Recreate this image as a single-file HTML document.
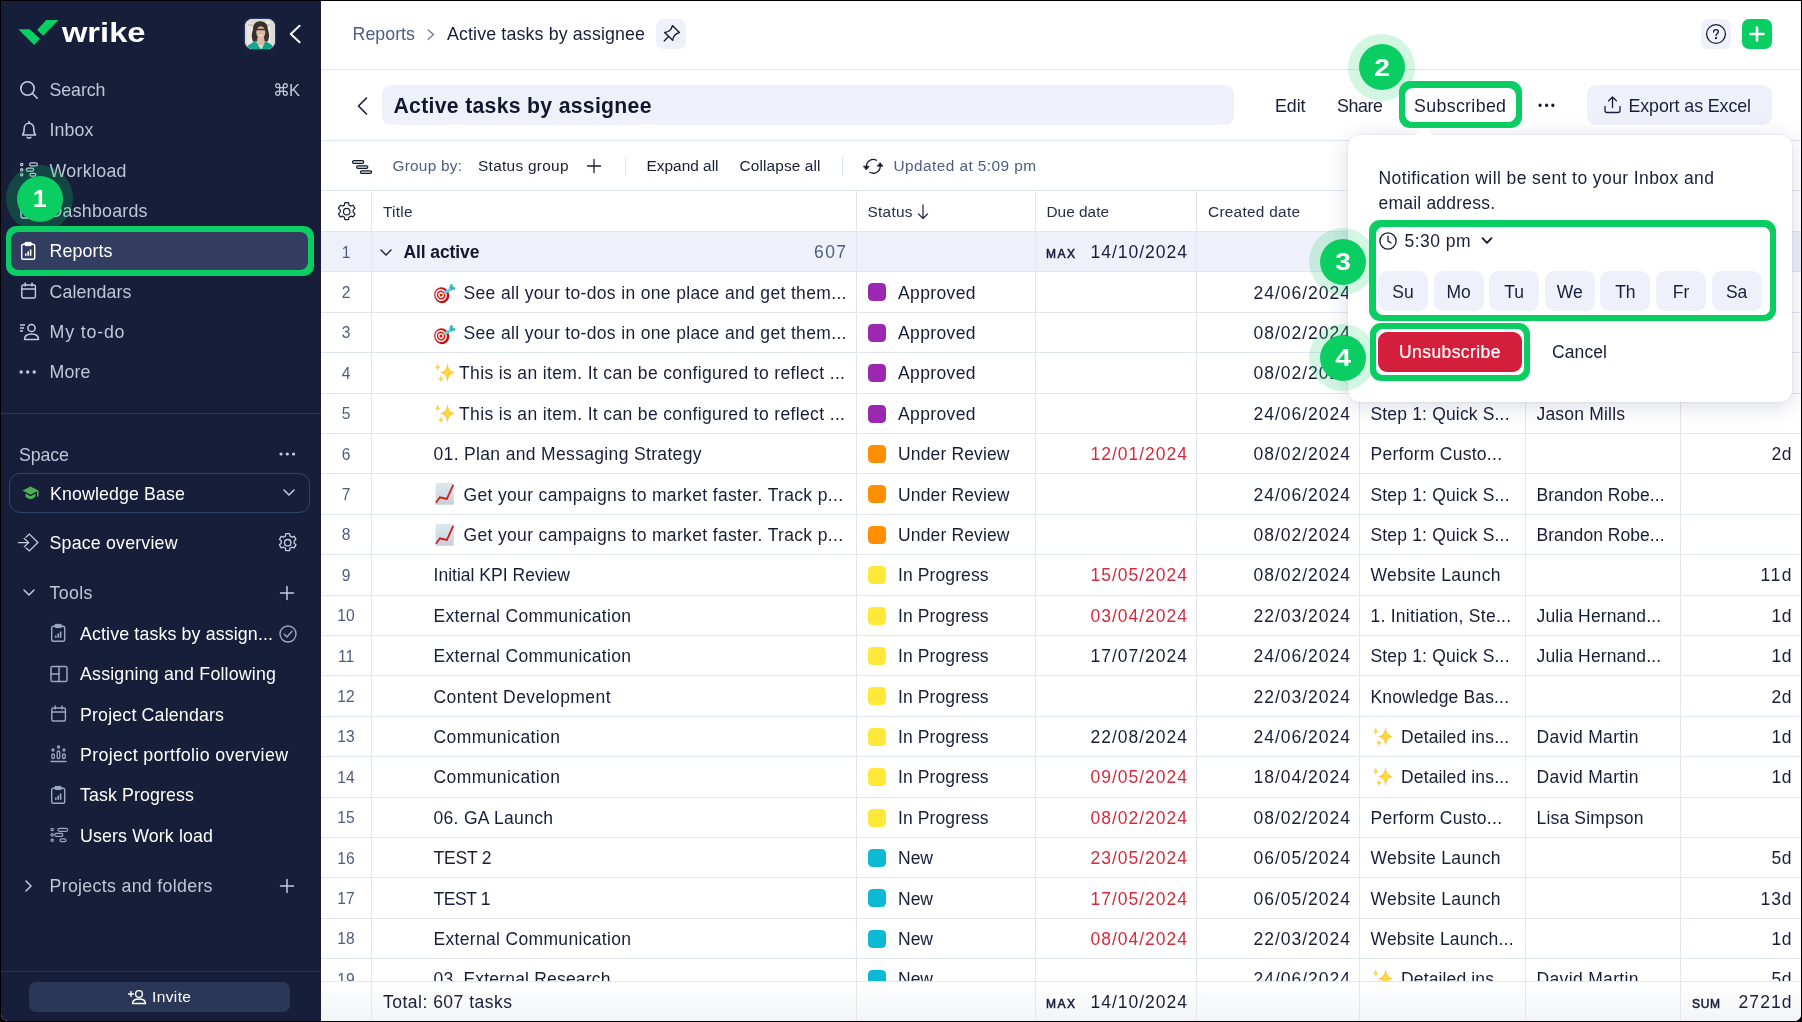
<!DOCTYPE html>
<html lang="en"><head><meta charset="utf-8"><title>Active tasks by assignee - Wrike</title>
<style>
html,body{margin:0;padding:0}
body{width:1802px;height:1022px;overflow:hidden;background:#000;position:relative;font-family:"Liberation Sans",sans-serif}
#app{position:absolute;left:1px;top:1px;width:1800px;height:1020px;overflow:hidden;background:#fff;border-radius:0 0 7px 7px}
#wrap{will-change:transform;position:absolute;left:-1px;top:-1px;width:1802px;height:1022px}
.t{position:absolute;white-space:pre;line-height:1;font-family:"Liberation Sans",sans-serif}
.a{position:absolute}
svg{position:absolute;overflow:visible}
.hl{position:absolute;background:#e2e6f1;height:1px}
.vl{position:absolute;background:#e2e6f1;width:1px}
</style></head><body><div id="app"><div id="wrap">
<div class="a" style="left:0px;top:0px;width:321.6px;height:1022px;background:#171e3a"></div>
<svg style="left:18px;top:20px" width="41" height="26" viewBox="0 0 41 26" fill="none" ><path d="M0.3 9.2 L11.6 9.2 L22 18.7 L16.1 25 Z M28.2 0 L40.7 0 L25.3 15.8 L19.1 10 Z" fill="#0bce62"/></svg>
<span class="t" style="top:19.00px;font-size:28px;color:#ffffff;font-weight:700;transform:scaleX(1.165);transform-origin:0 0;left:62.00px;">wrike</span>
<div class="a" style="left:244.5px;top:18.5px;width:30px;height:30px;border-radius:7.5px;overflow:hidden;background:#dcdad7;box-shadow:0 0 0 1.2px #2a3560"><svg style="left:0;top:0" width="30" height="30" viewBox="0 0 30 30"><rect width="30" height="30" fill="#dddbd8"/><rect x="20" y="2" width="5" height="24" fill="#ecebe9"/><rect x="2" y="4" width="5" height="22" fill="#e9e8e6"/><rect x="3" y="5" width="22" height="2.2" fill="#d5c9b8"/><path d="M15.5 2.2 C9.5 1.8 7.8 7 8 11 C6.2 14.5 6.5 19.5 8.2 22.5 L22.5 22.5 C24.8 18.5 24.2 13.5 22.8 10.5 C23 6 20.5 2.4 15.5 2.2 Z" fill="#3b312b"/><ellipse cx="15.8" cy="13.2" rx="4.5" ry="6" fill="#dcb9a2"/><path d="M11.2 10.6 H20.4" stroke="#3a2f2a" stroke-width="1.5"/><path d="M13.6 16.2 Q15.8 17.6 18 16.2" stroke="#f5eeea" stroke-width="1" fill="none"/><path d="M12.6 18 L19 18 L20.2 26 L11.4 26 Z" fill="#dcb9a2"/><path d="M1.5 30 L3 26.5 L10.2 21.8 L14.8 28.5 L15.6 30 Z" fill="#12a98c"/><path d="M28.5 30 L27 26 L20.4 22 L17.4 28.8 L16.8 30 Z" fill="#0fa184"/></svg></div>
<svg style="left:289px;top:24px" width="12" height="20" viewBox="0 0 12 20" fill="none" stroke="#ffffff" stroke-width="2" stroke-linecap="round" stroke-linejoin="round"><path d="M10.6 1.8 L1.8 10 L10.6 18.2"/></svg>
<div class="a" style="left:5.5px;top:226px;width:308.5px;height:50px;background:#0bce62;border-radius:10px"></div>
<div class="a" style="left:11.3px;top:232px;width:297.0px;height:37.60000000000002px;background:#323d60;border-radius:8px"></div>
<svg style="left:19px;top:80px" width="20" height="20" viewBox="0 0 20 20" fill="none" stroke="#c5ccdf" stroke-width="1.6" stroke-linecap="round" stroke-linejoin="round"><circle cx="8.5" cy="8.5" r="6.7"/><path d="M13.5 13.5 L18.2 18.2"/></svg>
<svg style="left:19px;top:120px" width="20" height="20" viewBox="0 0 20 20" fill="none" stroke="#c5ccdf" stroke-width="1.5" stroke-linecap="round" stroke-linejoin="round"><path d="M3.5 15 H16.5 C15 13.5 14.8 11.5 14.8 8.5 C14.8 5.5 12.8 3.3 10 3.3 C7.2 3.3 5.2 5.5 5.2 8.5 C5.2 11.5 5 13.5 3.5 15 Z"/><path d="M8.2 17.3 Q10 18.8 11.8 17.3"/><path d="M10 1.6 V3"/></svg>
<svg style="left:19px;top:160px" width="20" height="20" viewBox="0 0 20 20" fill="none" stroke="#c5ccdf" stroke-width="1.2" stroke-linecap="round" stroke-linejoin="round"><circle cx="2.7" cy="4.5" r="1.15"/><circle cx="2.7" cy="9.7" r="1.15"/><circle cx="2.7" cy="14.8" r="1.15"/><rect x="10.6" y="2.9" width="7.8" height="3" rx="1.5"/><rect x="7.4" y="8.2" width="7.2" height="3" rx="1.5"/><rect x="11" y="13.4" width="5.8" height="2.8" rx="1.4"/></svg>
<svg style="left:20px;top:201px" width="18" height="18" viewBox="0 0 18 18" fill="none" stroke="#c5ccdf" stroke-width="1.5" stroke-linecap="round" stroke-linejoin="round"><rect x="1" y="1" width="16" height="16" rx="2"/><path d="M1 7 H17 M7 7 V17"/></svg>
<svg style="left:19.5px;top:240.5px" width="18" height="20" viewBox="0 0 18 20" fill="none" stroke="#ffffff" stroke-width="1.4" stroke-linecap="round" stroke-linejoin="round"><rect x="1.7" y="3.2" width="13" height="15" rx="1.8"/><rect x="4.9" y="1.4" width="6.6" height="3.2" rx="0.9" fill="#ffffff" stroke-width="1"/><path d="M5.8 14.8 V12.6 M8.2 14.8 V10.6 M10.6 14.8 V8.6" stroke-width="1.6" stroke-linecap="butt"/></svg>
<svg style="left:20px;top:282px" width="18" height="18" viewBox="0 0 18 18" fill="none" stroke="#c5ccdf" stroke-width="1.4" stroke-linecap="round" stroke-linejoin="round"><rect x="1.8" y="3" width="13.6" height="13" rx="1.5"/><path d="M1.8 7 H15.4 M5.2 1 V4 M12 1 V4"/></svg>
<svg style="left:19px;top:322px" width="21" height="20" viewBox="0 0 21 20" fill="none" stroke="#c5ccdf" stroke-width="1.5" stroke-linecap="round" stroke-linejoin="round"><circle cx="12.5" cy="6" r="3.6"/><path d="M5.5 17.5 C5.5 13.5 8.5 12 12.5 12 C16.5 12 19.5 13.5 19.5 17.5 Z"/><path d="M1 3 H6 M1 6 H5 M1 9 H4" stroke-linecap="butt"/></svg>
<svg style="left:19px;top:369px" width="18" height="6" viewBox="0 0 18 6" fill="#c5ccdf" ><circle cx="2.2" cy="3" r="1.7"/><circle cx="8.7" cy="3" r="1.7"/><circle cx="15.2" cy="3" r="1.7"/></svg>
<span class="t" style="top:82.00px;font-size:17.8px;color:#bec6da;letter-spacing:-0.069px;left:49.50px;">Search</span>
<span class="t" style="top:122.00px;font-size:17.8px;color:#bec6da;letter-spacing:0.125px;left:49.50px;">Inbox</span>
<span class="t" style="top:163.00px;font-size:17.8px;color:#bec6da;letter-spacing:0.317px;left:49.50px;">Workload</span>
<span class="t" style="top:203.00px;font-size:17.8px;color:#bec6da;letter-spacing:0.234px;left:49.50px;">Dashboards</span>
<span class="t" style="top:243.00px;font-size:17.8px;color:#ffffff;letter-spacing:0.122px;left:49.50px;">Reports</span>
<span class="t" style="top:284.00px;font-size:17.8px;color:#bec6da;letter-spacing:0.117px;left:49.50px;">Calendars</span>
<span class="t" style="top:324.00px;font-size:17.8px;color:#bec6da;letter-spacing:0.833px;left:49.50px;">My to-do</span>
<span class="t" style="top:364.00px;font-size:17.8px;color:#bec6da;letter-spacing:0.161px;left:49.50px;">More</span>
<span class="t" style="top:82.00px;font-size:16.5px;color:#bec6da;letter-spacing:-1.016px;left:273.00px;">⌘K</span>
<div class="a" style="left:6.399999999999999px;top:165.1px;width:67.0px;height:67.0px;background:rgba(11,206,98,0.24);border-radius:50%"></div>
<div class="a" style="left:16.9px;top:175.6px;width:46.0px;height:46.0px;background:#0bce62;border-radius:50%"></div>
<span class="t" style="top:187.00px;font-size:24.5px;color:#ffffff;font-weight:700;transform:scaleX(1.0);transform-origin:50% 0;left:-260.10px;width:600px;text-align:center;">1</span>
<div class="a" style="left:0px;top:413px;width:321px;height:1px;background:#2a3557"></div>
<span class="t" style="top:447.00px;font-size:17.8px;color:#bec6da;letter-spacing:-0.105px;left:19.00px;">Space</span>
<svg style="left:279px;top:451px" width="18" height="6" viewBox="0 0 18 6" fill="#c5ccdf" ><circle cx="2" cy="3" r="1.6"/><circle cx="8.3" cy="3" r="1.6"/><circle cx="14.6" cy="3" r="1.6"/></svg>
<div class="a" style="left:9px;top:473px;width:301px;height:40px;border:1.3px solid #344269;border-radius:11px;box-sizing:border-box"></div>
<svg style="left:22px;top:486px" width="18" height="15" viewBox="0 0 18 15" fill="none" ><path d="M8.5 0.5 L0.5 4.6 L8.5 8.7 L15 5.4 V10.5 H16.5 V4.6 Z" fill="#4caf50"/><path d="M3.5 7.6 V10.8 Q8.5 15.5 13.5 10.8 V7.6 L8.5 10.2 Z" fill="#4caf50"/></svg>
<span class="t" style="top:486.00px;font-size:17.8px;color:#ffffff;letter-spacing:0.118px;left:50.00px;">Knowledge Base</span>
<svg style="left:283px;top:489px" width="12" height="8" viewBox="0 0 12 8" fill="none" stroke="#c5ccdf" stroke-width="1.5" stroke-linecap="round" stroke-linejoin="round"><path d="M1 1 L6 6 L11 1"/></svg>
<svg style="left:18px;top:532px" width="21" height="20" viewBox="0 0 21 20" fill="none" stroke="#c5ccdf" stroke-width="1.25" stroke-linecap="round" stroke-linejoin="round"><path d="M0.4 10.6 H10.5 M6.2 6.5 L10.7 10.6 L6.2 14.7"/><path d="M8.1 5 L11.3 2.1 L19.9 10.5 L11.3 19 L8.1 16" stroke-linejoin="miter"/></svg>
<span class="t" style="top:535.00px;font-size:17.8px;color:#ffffff;letter-spacing:0.190px;left:49.50px;">Space overview</span>
<svg style="left:276.6px;top:532px" width="21.4" height="21.4" viewBox="0 0 20 20" fill="none" stroke="#c5ccdf" stroke-width="1.25" stroke-linecap="round" stroke-linejoin="round"><path d="M8.3 1.5 h3.4 l0.5 2.3 a6.5 6.5 0 0 1 1.6 0.9 l2.2 -0.7 l1.7 2.9 l-1.7 1.6 a6.5 6.5 0 0 1 0 1.9 l1.7 1.6 l-1.7 2.9 l-2.2 -0.7 a6.5 6.5 0 0 1 -1.6 0.9 l-0.5 2.3 h-3.4 l-0.5 -2.3 a6.5 6.5 0 0 1 -1.6 -0.9 l-2.2 0.7 l-1.7 -2.9 l1.7 -1.6 a6.5 6.5 0 0 1 0 -1.9 l-1.7 -1.6 l1.7 -2.9 l2.2 0.7 a6.5 6.5 0 0 1 1.6 -0.9 z"/><circle cx="10" cy="10" r="3"/></svg>
<svg style="left:23px;top:589px" width="12" height="8" viewBox="0 0 12 8" fill="none" stroke="#c5ccdf" stroke-width="1.5" stroke-linecap="round" stroke-linejoin="round"><path d="M1 1 L6 6 L11 1"/></svg>
<span class="t" style="top:585.00px;font-size:17.8px;color:#bec6da;letter-spacing:0.371px;left:49.50px;">Tools</span>
<svg style="left:280px;top:586px" width="14" height="14" viewBox="0 0 14 14" fill="none" stroke="#c5ccdf" stroke-width="1.5" stroke-linecap="round" stroke-linejoin="round"><path d="M7 0.5 V13.5 M0.5 7 H13.5"/></svg>
<span class="t" style="top:626.00px;font-size:17.8px;color:#ffffff;letter-spacing:0.135px;left:80.00px;">Active tasks by assign...</span>
<span class="t" style="top:666.00px;font-size:17.8px;color:#ffffff;letter-spacing:0.192px;left:80.00px;">Assigning and Following</span>
<span class="t" style="top:707.00px;font-size:17.8px;color:#ffffff;letter-spacing:0.166px;left:80.00px;">Project Calendars</span>
<span class="t" style="top:747.00px;font-size:17.8px;color:#ffffff;letter-spacing:0.374px;left:80.00px;">Project portfolio overview</span>
<span class="t" style="top:787.00px;font-size:17.8px;color:#ffffff;letter-spacing:0.112px;left:80.00px;">Task Progress</span>
<span class="t" style="top:828.00px;font-size:17.8px;color:#ffffff;letter-spacing:0.136px;left:80.00px;">Users Work load</span>
<svg style="left:50px;top:623px" width="18" height="20" viewBox="0 0 18 20" fill="none" stroke="#9ca7c3" stroke-width="1.4" stroke-linecap="round" stroke-linejoin="round"><rect x="1.7" y="3.2" width="13" height="15" rx="1.8"/><rect x="4.9" y="1.4" width="6.6" height="3.2" rx="0.9" fill="#9ca7c3" stroke-width="1"/><path d="M5.8 14.8 V12.6 M8.2 14.8 V10.6 M10.6 14.8 V8.6" stroke-width="1.6" stroke-linecap="butt"/></svg>
<svg style="left:50px;top:665px" width="18" height="18" viewBox="0 0 18 18" fill="none" stroke="#9ca7c3" stroke-width="1.5" stroke-linecap="round" stroke-linejoin="round"><rect x="1" y="1.5" width="16" height="15" rx="1.6"/><path d="M9 1.5 V16.5 M1 9 H9"/></svg>
<svg style="left:50px;top:705px" width="18" height="18" viewBox="0 0 18 18" fill="none" stroke="#9ca7c3" stroke-width="1.4" stroke-linecap="round" stroke-linejoin="round"><rect x="1.8" y="3" width="13.6" height="13" rx="1.5"/><path d="M1.8 7 H15.4 M5.2 1 V4 M12 1 V4"/></svg>
<svg style="left:50px;top:745px" width="18" height="18" viewBox="0 0 18 18" fill="none" stroke="#9ca7c3" stroke-width="1.3" stroke-linecap="round" stroke-linejoin="round"><circle cx="8.5" cy="2" r="1"/><circle cx="3" cy="5" r="1"/><circle cx="14" cy="5" r="1"/><rect x="1.8" y="9" width="2.6" height="4.5" rx="1.2"/><rect x="7.2" y="6" width="2.6" height="7.5" rx="1.2"/><rect x="12.6" y="9" width="2.6" height="4.5" rx="1.2"/><path d="M1 16.5 H16"/></svg>
<svg style="left:50px;top:785px" width="18" height="20" viewBox="0 0 18 20" fill="none" stroke="#9ca7c3" stroke-width="1.4" stroke-linecap="round" stroke-linejoin="round"><rect x="1.7" y="3.2" width="13" height="15" rx="1.8"/><rect x="4.9" y="1.4" width="6.6" height="3.2" rx="0.9" fill="#9ca7c3" stroke-width="1"/><path d="M5.8 14.8 V12.6 M8.2 14.8 V10.6 M10.6 14.8 V8.6" stroke-width="1.6" stroke-linecap="butt"/></svg>
<svg style="left:50px;top:825px" width="20" height="20" viewBox="0 0 20 20" fill="none" stroke="#9ca7c3" stroke-width="1.2" stroke-linecap="round" stroke-linejoin="round"><circle cx="2.2" cy="4.4" r="1.15"/><circle cx="2.2" cy="9.8" r="1.15"/><circle cx="2.2" cy="15.2" r="1.15"/><rect x="8" y="3.3" width="9.6" height="3" rx="1.5"/><rect x="4.8" y="8.4" width="8" height="3" rx="1.5"/><rect x="10" y="13.8" width="6" height="2.8" rx="1.4"/></svg>
<svg style="left:279px;top:625px" width="18" height="18" viewBox="0 0 18 18" fill="none" stroke="#9ca7c3" stroke-width="1.4" stroke-linecap="round" stroke-linejoin="round"><circle cx="9" cy="9" r="8"/><path d="M5.2 9.3 L8 12 L13 6.2"/></svg>
<svg style="left:25px;top:880px" width="8" height="12" viewBox="0 0 8 12" fill="none" stroke="#c5ccdf" stroke-width="1.5" stroke-linecap="round" stroke-linejoin="round"><path d="M1 1 L6 6 L1 11"/></svg>
<span class="t" style="top:878.00px;font-size:17.8px;color:#bec6da;letter-spacing:0.308px;left:49.50px;">Projects and folders</span>
<svg style="left:280px;top:879px" width="14" height="14" viewBox="0 0 14 14" fill="none" stroke="#c5ccdf" stroke-width="1.5" stroke-linecap="round" stroke-linejoin="round"><path d="M7 0.5 V13.5 M0.5 7 H13.5"/></svg>
<div class="a" style="left:0px;top:971px;width:321px;height:1px;background:#2a3557"></div>
<div class="a" style="left:29px;top:982px;width:261px;height:30px;background:#2b3756;border-radius:7px"></div>
<svg style="left:128px;top:989px" width="18" height="16" viewBox="0 0 18 16" fill="none" stroke="#ffffff" stroke-width="1.4" stroke-linecap="round" stroke-linejoin="round"><circle cx="11" cy="5" r="3.4"/><path d="M4.5 14.5 C4.5 11 7.5 10 11 10 C14.5 10 17.5 11 17.5 14.5 Z"/><path d="M3 2.5 V7.5 M0.5 5 H5.5"/></svg>
<span class="t" style="top:989.00px;font-size:15.5px;color:#ffffff;letter-spacing:0.388px;left:152.00px;">Invite</span>
<div class="a" style="left:321px;top:0px;width:1481px;height:1022px;background:#ffffff"></div>
<span class="t" style="top:26.00px;font-size:17.8px;color:#4c5c83;letter-spacing:0.039px;left:352.50px;">Reports</span>
<svg style="left:427px;top:29px" width="8" height="12" viewBox="0 0 8 12" fill="none" stroke="#6b7a99" stroke-width="1.3" stroke-linecap="round" stroke-linejoin="round"><path d="M1.2 1 L6.5 5.6 L1.2 10.2"/></svg>
<span class="t" style="top:26.00px;font-size:17.8px;color:#181d3a;letter-spacing:0.143px;left:447.00px;">Active tasks by assignee</span>
<div class="a" style="left:656px;top:19px;width:30px;height:30px;background:#eef1f9;border-radius:7px"></div>
<svg style="left:662px;top:25px" width="18" height="18" viewBox="0 0 18 18" fill="none" stroke="#12162e" stroke-width="1.35" stroke-linecap="round" stroke-linejoin="round"><path d="M2.7 7.4 C6.8 7 9.4 5 10.4 0.6 L17.4 7.6 C13.2 8.6 11.2 11.2 10.7 15.3 Z"/><path d="M6.5 11.6 L2.2 15.9"/></svg>
<div class="a" style="left:1701px;top:19px;width:30px;height:30px;background:#eef1f9;border-radius:7px"></div>
<svg style="left:1706px;top:24px" width="20" height="20" viewBox="0 0 20 20" fill="none" stroke="#181d3a" stroke-width="1.3" stroke-linecap="round" stroke-linejoin="round"><circle cx="10" cy="10" r="9.4"/><path d="M7.6 8 C7.6 6.4 8.6 5.6 10 5.6 C11.4 5.6 12.4 6.5 12.4 7.8 C12.4 9.6 10 9.6 10 11.6"/><circle cx="10" cy="14.2" r="0.5" fill="#181d3a"/></svg>
<div class="a" style="left:1742px;top:19px;width:30px;height:30px;background:#0bce62;border-radius:7px"></div>
<svg style="left:1749px;top:26px" width="16" height="16" viewBox="0 0 16 16" fill="none" stroke="#ffffff" stroke-width="2.6" stroke-linecap="round" stroke-linejoin="round"><path d="M8 1.5 V14.5 M1.5 8 H14.5"/></svg>
<div class="a" style="left:321px;top:69px;width:1481px;height:1px;background:#e2e6f1"></div>
<svg style="left:357px;top:97px" width="11" height="18" viewBox="0 0 11 18" fill="none" stroke="#181d3a" stroke-width="1.6" stroke-linecap="round" stroke-linejoin="round"><path d="M9.5 1 L1.5 9 L9.5 17"/></svg>
<div class="a" style="left:382px;top:85px;width:852px;height:40px;background:#eef1f9;border-radius:9px"></div>
<span class="t" style="top:95.00px;font-size:21.2px;color:#12162e;font-weight:700;letter-spacing:0.310px;left:393.50px;">Active tasks by assignee</span>
<span class="t" style="top:98.00px;font-size:17.8px;color:#181d3a;letter-spacing:-0.047px;left:1275.00px;">Edit</span>
<span class="t" style="top:98.00px;font-size:17.8px;color:#181d3a;letter-spacing:-0.363px;left:1337.00px;">Share</span>
<span class="t" style="top:100.00px;font-size:12px;color:#181d3a;letter-spacing:2.195px;left:1538.00px;">•••</span>
<div class="a" style="left:1587px;top:85px;width:185px;height:40px;background:#eef1f9;border-radius:9px"></div>
<svg style="left:1604px;top:96px" width="17" height="18" viewBox="0 0 17 18" fill="none" stroke="#181d3a" stroke-width="1.3" stroke-linecap="round" stroke-linejoin="round"><path d="M8.5 1.2 V11.5 M4.6 4.8 L8.5 1 L12.4 4.8"/><path d="M1 10.5 V14.5 Q1 16.5 3 16.5 H14 Q16 16.5 16 14.5 V10.5"/></svg>
<span class="t" style="top:98.00px;font-size:17.8px;color:#181d3a;letter-spacing:-0.074px;left:1628.50px;">Export as Excel</span>
<div class="a" style="left:321px;top:140px;width:1481px;height:1px;background:#e2e6f1"></div>
<svg style="left:351px;top:159px" width="22" height="16" viewBox="0 0 22 16" fill="#ebebeb" stroke="#12162e" stroke-width="1.2" stroke-linecap="round" stroke-linejoin="round"><rect x="1.5" y="1.7" width="11.2" height="2.6" rx="1.3"/><rect x="5.6" y="6.8" width="11.2" height="2.6" rx="1.3"/><rect x="9.4" y="11.8" width="11.2" height="2.6" rx="1.3"/></svg>
<span class="t" style="top:158.00px;font-size:15.4px;color:#4c5c83;letter-spacing:0.238px;left:392.50px;">Group by:</span>
<span class="t" style="top:158.00px;font-size:15.4px;color:#181d3a;letter-spacing:0.293px;left:478.00px;">Status group</span>
<svg style="left:587px;top:159px" width="14" height="14" viewBox="0 0 14 14" fill="none" stroke="#181d3a" stroke-width="1.3" stroke-linecap="round" stroke-linejoin="round"><path d="M7 0.5 V13.5 M0.5 7 H13.5"/></svg>
<div class="a" style="left:625px;top:157px;width:1px;height:19px;background:#dfe3ee"></div>
<span class="t" style="top:158.00px;font-size:15.4px;color:#181d3a;letter-spacing:0.014px;left:646.50px;">Expand all</span>
<span class="t" style="top:158.00px;font-size:15.4px;color:#181d3a;letter-spacing:0.131px;left:739.50px;">Collapse all</span>
<div class="a" style="left:842px;top:157px;width:1px;height:19px;background:#dfe3ee"></div>
<svg style="left:863px;top:156px" width="21" height="20" viewBox="0 0 21 20" fill="none" stroke="#12162e" stroke-width="1.3" stroke-linecap="round" stroke-linejoin="round"><path d="M13.6 4.3 A6.9 6.9 0 0 0 3.4 10.6 M6.9 16.3 A6.9 6.9 0 0 0 17.2 10"/><path d="M0.5 10.2 H6.3 L3.4 13.8 Z M14.4 10.2 H20 L17.2 6.7 Z" fill="#12162e" stroke-width="0.6"/></svg>
<span class="t" style="top:158.00px;font-size:15.4px;color:#4c5c83;letter-spacing:0.430px;left:893.50px;">Updated at 5:09 pm</span>
<div class="a" style="left:321px;top:190px;width:1481px;height:1px;background:#e2e6f1"></div>
<div class="a" style="left:321px;top:231px;width:1481px;height:40px;background:#eef1f9"></div>
<svg style="left:336.3px;top:201.2px" width="21.4" height="21.4" viewBox="0 0 20 20" fill="none" stroke="#181d3a" stroke-width="1.15" stroke-linecap="round" stroke-linejoin="round"><path d="M8.3 1.5 h3.4 l0.5 2.3 a6.5 6.5 0 0 1 1.6 0.9 l2.2 -0.7 l1.7 2.9 l-1.7 1.6 a6.5 6.5 0 0 1 0 1.9 l1.7 1.6 l-1.7 2.9 l-2.2 -0.7 a6.5 6.5 0 0 1 -1.6 0.9 l-0.5 2.3 h-3.4 l-0.5 -2.3 a6.5 6.5 0 0 1 -1.6 -0.9 l-2.2 0.7 l-1.7 -2.9 l1.7 -1.6 a6.5 6.5 0 0 1 0 -1.9 l-1.7 -1.6 l1.7 -2.9 l2.2 0.7 a6.5 6.5 0 0 1 1.6 -0.9 z"/><circle cx="10" cy="10" r="3"/></svg>
<span class="t" style="top:204.00px;font-size:15.4px;color:#272e4b;letter-spacing:0.246px;left:383.00px;">Title</span>
<span class="t" style="top:204.00px;font-size:15.4px;color:#272e4b;letter-spacing:0.272px;left:867.50px;">Status</span>
<svg style="left:917px;top:204px" width="12" height="16" viewBox="0 0 12 16" fill="none" stroke="#272e4b" stroke-width="1.3" stroke-linecap="round" stroke-linejoin="round"><path d="M6 1 V14.5 M1.5 10 L6 14.5 L10.5 10"/></svg>
<span class="t" style="top:204.00px;font-size:15.4px;color:#272e4b;letter-spacing:0.004px;left:1046.50px;">Due date</span>
<span class="t" style="top:204.00px;font-size:15.4px;color:#272e4b;letter-spacing:0.273px;left:1208.00px;">Created date</span>
<div class="a" style="left:321px;top:231px;width:1481px;height:1px;background:#e2e6f1"></div>
<svg width="0" height="0" style="left:0;top:0"><defs><radialGradient id="sg" cx="50%" cy="50%" r="50%"><stop offset="0" stop-color="#ffe22e"/><stop offset="0.35" stop-color="#ffd43a"/><stop offset="1" stop-color="#ffab57"/></radialGradient><linearGradient id="cg" x1="0" y1="0" x2="0" y2="1"><stop offset="0" stop-color="#dce8ef"/><stop offset="1" stop-color="#c6d0d9"/></linearGradient><radialGradient id="tg" cx="40%" cy="40%" r="65%"><stop offset="0" stop-color="#e8262a"/><stop offset="1" stop-color="#b80d12"/></radialGradient></defs></svg>
<div class="a" style="left:321px;top:271px;width:1481px;height:1px;background:#e2e6f1"></div>
<span class="t" style="top:245.00px;font-size:15.6px;color:#4c5c83;left:46.00px;width:600px;text-align:center;">1</span>
<svg style="left:380px;top:249px" width="12" height="8" viewBox="0 0 12 8" fill="none" stroke="#181d3a" stroke-width="1.4" stroke-linecap="round" stroke-linejoin="round"><path d="M1 1 L6 6 L11 1"/></svg>
<span class="t" style="top:244.00px;font-size:17.5px;color:#12162e;font-weight:700;letter-spacing:-0.095px;left:403.50px;">All active</span>
<span class="t" style="top:244.00px;font-size:17.5px;color:#4c5c83;letter-spacing:1.398px;right:954.60px;">607</span>
<span class="t" style="top:248.00px;font-size:12px;color:#181d3a;letter-spacing:1.492px;-webkit-text-stroke:0.55px;left:1046.00px;">MAX</span>
<span class="t" style="top:244.00px;font-size:17.5px;color:#181d3a;letter-spacing:0.990px;right:614.01px;">14/10/2024</span>
<div class="a" style="left:321px;top:312px;width:1481px;height:1px;background:#e2e6f1"></div>
<span class="t" style="top:285.00px;font-size:15.6px;color:#4c5c83;left:46.00px;width:600px;text-align:center;">2</span>
<svg style="left:433px;top:283.2px" width="24" height="21" viewBox="0 0 24 21" fill="none" ><g transform="rotate(-25 8.7 12.2)"><ellipse cx="8.7" cy="12.2" rx="7.5" ry="8" fill="url(#tg)"/><ellipse cx="8.2" cy="11.8" rx="5.7" ry="6.1" fill="#fbf3f1"/><ellipse cx="8.2" cy="11.8" rx="4.2" ry="4.5" fill="#d9151b"/><ellipse cx="8.2" cy="11.8" rx="2.8" ry="3" fill="#fbf3f1"/><ellipse cx="8.2" cy="11.8" rx="1.4" ry="1.5" fill="#d9151b"/></g><path d="M9.6 11.3 L12.4 9.4" stroke="#f2b11c" stroke-width="1.3" stroke-linecap="round"/><path d="M12.6 9.3 L17.4 6.5" stroke="#4fd8e6" stroke-width="3" stroke-linecap="round"/><path d="M16.3 4.6 L17.6 1 L19.6 1.6 L19.8 3.6 L22.6 4.8 L22 6.4 L18.2 7.3 Z" fill="#36b4c6"/></svg>
<span class="t" style="top:285.00px;font-size:17.5px;color:#181d3a;letter-spacing:0.345px;left:463.50px;">See all your to-dos in one place and get them...</span>
<div class="a" style="left:868px;top:283px;width:18px;height:18px;background:#9c27b0;border-radius:4.5px"></div>
<span class="t" style="top:285.00px;font-size:17.5px;color:#181d3a;letter-spacing:0.368px;left:898.00px;">Approved</span>
<span class="t" style="top:285.00px;font-size:17.5px;color:#181d3a;letter-spacing:0.990px;right:451.01px;">24/06/2024</span>
<div class="a" style="left:321px;top:352px;width:1481px;height:1px;background:#e2e6f1"></div>
<span class="t" style="top:325.00px;font-size:15.6px;color:#4c5c83;left:46.00px;width:600px;text-align:center;">3</span>
<svg style="left:433px;top:323.6px" width="24" height="21" viewBox="0 0 24 21" fill="none" ><g transform="rotate(-25 8.7 12.2)"><ellipse cx="8.7" cy="12.2" rx="7.5" ry="8" fill="url(#tg)"/><ellipse cx="8.2" cy="11.8" rx="5.7" ry="6.1" fill="#fbf3f1"/><ellipse cx="8.2" cy="11.8" rx="4.2" ry="4.5" fill="#d9151b"/><ellipse cx="8.2" cy="11.8" rx="2.8" ry="3" fill="#fbf3f1"/><ellipse cx="8.2" cy="11.8" rx="1.4" ry="1.5" fill="#d9151b"/></g><path d="M9.6 11.3 L12.4 9.4" stroke="#f2b11c" stroke-width="1.3" stroke-linecap="round"/><path d="M12.6 9.3 L17.4 6.5" stroke="#4fd8e6" stroke-width="3" stroke-linecap="round"/><path d="M16.3 4.6 L17.6 1 L19.6 1.6 L19.8 3.6 L22.6 4.8 L22 6.4 L18.2 7.3 Z" fill="#36b4c6"/></svg>
<span class="t" style="top:325.00px;font-size:17.5px;color:#181d3a;letter-spacing:0.345px;left:463.50px;">See all your to-dos in one place and get them...</span>
<div class="a" style="left:868px;top:324px;width:18px;height:18px;background:#9c27b0;border-radius:4.5px"></div>
<span class="t" style="top:325.00px;font-size:17.5px;color:#181d3a;letter-spacing:0.368px;left:898.00px;">Approved</span>
<span class="t" style="top:325.00px;font-size:17.5px;color:#181d3a;letter-spacing:0.990px;right:451.01px;">08/02/2024</span>
<div class="a" style="left:321px;top:393px;width:1481px;height:1px;background:#e2e6f1"></div>
<span class="t" style="top:366.00px;font-size:15.6px;color:#4c5c83;left:46.00px;width:600px;text-align:center;">4</span>
<svg style="left:434px;top:362.4px" width="22" height="21" viewBox="0 0 22 21" fill="none" ><path d="M13.5 1.0 Q14.5 9.4 20.9 10.4 Q14.5 11.4 13.5 19.8 Q12.5 11.4 6.1 10.4 Q12.5 9.4 13.5 1.0 Z" fill="url(#sg)"/><path d="M3.7 1.2000000000000002 Q4.15 4.85 6.6 5.3 Q4.15 5.75 3.7 9.399999999999999 Q3.25 5.75 0.8000000000000003 5.3 Q3.25 4.85 3.7 1.2000000000000002 Z" fill="url(#sg)"/><path d="M7 12.899999999999999 Q7.45 16.25 9.9 16.7 Q7.45 17.15 7 20.5 Q6.55 17.15 4.1 16.7 Q6.55 16.25 7 12.899999999999999 Z" fill="url(#sg)"/></svg>
<span class="t" style="top:365.00px;font-size:17.5px;color:#181d3a;letter-spacing:0.359px;left:459.00px;">This is an item. It can be configured to reflect ...</span>
<div class="a" style="left:868px;top:364px;width:18px;height:18px;background:#9c27b0;border-radius:4.5px"></div>
<span class="t" style="top:365.00px;font-size:17.5px;color:#181d3a;letter-spacing:0.368px;left:898.00px;">Approved</span>
<span class="t" style="top:365.00px;font-size:17.5px;color:#181d3a;letter-spacing:0.990px;right:451.01px;">08/02/2024</span>
<div class="a" style="left:321px;top:433px;width:1481px;height:1px;background:#e2e6f1"></div>
<span class="t" style="top:406.00px;font-size:15.6px;color:#4c5c83;left:46.00px;width:600px;text-align:center;">5</span>
<svg style="left:434px;top:402.8px" width="22" height="21" viewBox="0 0 22 21" fill="none" ><path d="M13.5 1.0 Q14.5 9.4 20.9 10.4 Q14.5 11.4 13.5 19.8 Q12.5 11.4 6.1 10.4 Q12.5 9.4 13.5 1.0 Z" fill="url(#sg)"/><path d="M3.7 1.2000000000000002 Q4.15 4.85 6.6 5.3 Q4.15 5.75 3.7 9.399999999999999 Q3.25 5.75 0.8000000000000003 5.3 Q3.25 4.85 3.7 1.2000000000000002 Z" fill="url(#sg)"/><path d="M7 12.899999999999999 Q7.45 16.25 9.9 16.7 Q7.45 17.15 7 20.5 Q6.55 17.15 4.1 16.7 Q6.55 16.25 7 12.899999999999999 Z" fill="url(#sg)"/></svg>
<span class="t" style="top:406.00px;font-size:17.5px;color:#181d3a;letter-spacing:0.359px;left:459.00px;">This is an item. It can be configured to reflect ...</span>
<div class="a" style="left:868px;top:405px;width:18px;height:18px;background:#9c27b0;border-radius:4.5px"></div>
<span class="t" style="top:406.00px;font-size:17.5px;color:#181d3a;letter-spacing:0.368px;left:898.00px;">Approved</span>
<span class="t" style="top:406.00px;font-size:17.5px;color:#181d3a;letter-spacing:0.990px;right:451.01px;">24/06/2024</span>
<span class="t" style="top:406.00px;font-size:17.5px;color:#181d3a;letter-spacing:0.166px;left:1370.50px;">Step 1: Quick S...</span>
<span class="t" style="top:406.00px;font-size:17.5px;color:#181d3a;letter-spacing:0.194px;left:1536.50px;">Jason Mills</span>
<div class="a" style="left:321px;top:473px;width:1481px;height:1px;background:#e2e6f1"></div>
<span class="t" style="top:447.00px;font-size:15.6px;color:#4c5c83;left:46.00px;width:600px;text-align:center;">6</span>
<span class="t" style="top:446.00px;font-size:17.5px;color:#181d3a;letter-spacing:0.340px;left:433.50px;">01. Plan and Messaging Strategy</span>
<div class="a" style="left:868px;top:445px;width:18px;height:18px;background:#ff8f00;border-radius:4.5px"></div>
<span class="t" style="top:446.00px;font-size:17.5px;color:#181d3a;letter-spacing:0.145px;left:898.00px;">Under Review</span>
<span class="t" style="top:446.00px;font-size:17.5px;color:#d42b3c;letter-spacing:0.990px;right:614.01px;">12/01/2024</span>
<span class="t" style="top:446.00px;font-size:17.5px;color:#181d3a;letter-spacing:0.990px;right:451.01px;">08/02/2024</span>
<span class="t" style="top:446.00px;font-size:17.5px;color:#181d3a;letter-spacing:0.273px;left:1370.50px;">Perform Custo...</span>
<span class="t" style="top:446.00px;font-size:17.5px;color:#181d3a;letter-spacing:0.531px;right:9.97px;">2d</span>
<div class="a" style="left:321px;top:514px;width:1481px;height:1px;background:#e2e6f1"></div>
<span class="t" style="top:487.00px;font-size:15.6px;color:#4c5c83;left:46.00px;width:600px;text-align:center;">7</span>
<svg style="left:435.4px;top:483.29999999999995px" width="20" height="23" viewBox="0 0 20 23" fill="none" ><rect x="0.6" y="0" width="18.2" height="21.8" rx="0.6" fill="url(#cg)"/><path d="M1 19.8 L4.9 14.3 L11.9 15.9 L18.2 1.8" stroke="#d11a1a" stroke-width="1.7" fill="none" stroke-linejoin="miter"/></svg>
<span class="t" style="top:487.00px;font-size:17.5px;color:#181d3a;letter-spacing:0.342px;left:463.50px;">Get your campaigns to market faster. Track p...</span>
<div class="a" style="left:868px;top:485px;width:18px;height:18px;background:#ff8f00;border-radius:4.5px"></div>
<span class="t" style="top:487.00px;font-size:17.5px;color:#181d3a;letter-spacing:0.145px;left:898.00px;">Under Review</span>
<span class="t" style="top:487.00px;font-size:17.5px;color:#181d3a;letter-spacing:0.990px;right:451.01px;">24/06/2024</span>
<span class="t" style="top:487.00px;font-size:17.5px;color:#181d3a;letter-spacing:0.166px;left:1370.50px;">Step 1: Quick S...</span>
<span class="t" style="top:487.00px;font-size:17.5px;color:#181d3a;letter-spacing:0.039px;left:1536.50px;">Brandon Robe...</span>
<div class="a" style="left:321px;top:554px;width:1481px;height:1px;background:#e2e6f1"></div>
<span class="t" style="top:527.00px;font-size:15.6px;color:#4c5c83;left:46.00px;width:600px;text-align:center;">8</span>
<svg style="left:435.4px;top:523.7px" width="20" height="23" viewBox="0 0 20 23" fill="none" ><rect x="0.6" y="0" width="18.2" height="21.8" rx="0.6" fill="url(#cg)"/><path d="M1 19.8 L4.9 14.3 L11.9 15.9 L18.2 1.8" stroke="#d11a1a" stroke-width="1.7" fill="none" stroke-linejoin="miter"/></svg>
<span class="t" style="top:527.00px;font-size:17.5px;color:#181d3a;letter-spacing:0.342px;left:463.50px;">Get your campaigns to market faster. Track p...</span>
<div class="a" style="left:868px;top:526px;width:18px;height:18px;background:#ff8f00;border-radius:4.5px"></div>
<span class="t" style="top:527.00px;font-size:17.5px;color:#181d3a;letter-spacing:0.145px;left:898.00px;">Under Review</span>
<span class="t" style="top:527.00px;font-size:17.5px;color:#181d3a;letter-spacing:0.990px;right:451.01px;">08/02/2024</span>
<span class="t" style="top:527.00px;font-size:17.5px;color:#181d3a;letter-spacing:0.166px;left:1370.50px;">Step 1: Quick S...</span>
<span class="t" style="top:527.00px;font-size:17.5px;color:#181d3a;letter-spacing:0.039px;left:1536.50px;">Brandon Robe...</span>
<div class="a" style="left:321px;top:595px;width:1481px;height:1px;background:#e2e6f1"></div>
<span class="t" style="top:568.00px;font-size:15.6px;color:#4c5c83;left:46.00px;width:600px;text-align:center;">9</span>
<span class="t" style="top:567.00px;font-size:17.5px;color:#181d3a;letter-spacing:0.019px;left:433.50px;">Initial KPI Review</span>
<div class="a" style="left:868px;top:566px;width:18px;height:18px;background:#ffe838;border-radius:4.5px"></div>
<span class="t" style="top:567.00px;font-size:17.5px;color:#181d3a;letter-spacing:0.102px;left:898.00px;">In Progress</span>
<span class="t" style="top:567.00px;font-size:17.5px;color:#d42b3c;letter-spacing:0.990px;right:614.01px;">15/05/2024</span>
<span class="t" style="top:567.00px;font-size:17.5px;color:#181d3a;letter-spacing:0.990px;right:451.01px;">08/02/2024</span>
<span class="t" style="top:567.00px;font-size:17.5px;color:#181d3a;letter-spacing:0.370px;left:1370.50px;">Website Launch</span>
<span class="t" style="top:567.00px;font-size:17.5px;color:#181d3a;letter-spacing:1.547px;right:8.95px;">11d</span>
<div class="a" style="left:321px;top:635px;width:1481px;height:1px;background:#e2e6f1"></div>
<span class="t" style="top:608.00px;font-size:15.6px;color:#4c5c83;left:46.00px;width:600px;text-align:center;">10</span>
<span class="t" style="top:608.00px;font-size:17.5px;color:#181d3a;letter-spacing:0.327px;left:433.50px;">External Communication</span>
<div class="a" style="left:868px;top:607px;width:18px;height:18px;background:#ffe838;border-radius:4.5px"></div>
<span class="t" style="top:608.00px;font-size:17.5px;color:#181d3a;letter-spacing:0.102px;left:898.00px;">In Progress</span>
<span class="t" style="top:608.00px;font-size:17.5px;color:#d42b3c;letter-spacing:0.990px;right:614.01px;">03/04/2024</span>
<span class="t" style="top:608.00px;font-size:17.5px;color:#181d3a;letter-spacing:0.990px;right:451.01px;">22/03/2024</span>
<span class="t" style="top:608.00px;font-size:17.5px;color:#181d3a;letter-spacing:0.264px;left:1370.50px;">1. Initiation, Ste...</span>
<span class="t" style="top:608.00px;font-size:17.5px;color:#181d3a;letter-spacing:0.128px;left:1536.50px;">Julia Hernand...</span>
<span class="t" style="top:608.00px;font-size:17.5px;color:#181d3a;letter-spacing:0.531px;right:9.97px;">1d</span>
<div class="a" style="left:321px;top:675px;width:1481px;height:1px;background:#e2e6f1"></div>
<span class="t" style="top:649.00px;font-size:15.6px;color:#4c5c83;left:46.00px;width:600px;text-align:center;">11</span>
<span class="t" style="top:648.00px;font-size:17.5px;color:#181d3a;letter-spacing:0.327px;left:433.50px;">External Communication</span>
<div class="a" style="left:868px;top:647px;width:18px;height:18px;background:#ffe838;border-radius:4.5px"></div>
<span class="t" style="top:648.00px;font-size:17.5px;color:#181d3a;letter-spacing:0.102px;left:898.00px;">In Progress</span>
<span class="t" style="top:648.00px;font-size:17.5px;color:#181d3a;letter-spacing:0.990px;right:614.01px;">17/07/2024</span>
<span class="t" style="top:648.00px;font-size:17.5px;color:#181d3a;letter-spacing:0.990px;right:451.01px;">24/06/2024</span>
<span class="t" style="top:648.00px;font-size:17.5px;color:#181d3a;letter-spacing:0.166px;left:1370.50px;">Step 1: Quick S...</span>
<span class="t" style="top:648.00px;font-size:17.5px;color:#181d3a;letter-spacing:0.128px;left:1536.50px;">Julia Hernand...</span>
<span class="t" style="top:648.00px;font-size:17.5px;color:#181d3a;letter-spacing:0.531px;right:9.97px;">1d</span>
<div class="a" style="left:321px;top:716px;width:1481px;height:1px;background:#e2e6f1"></div>
<span class="t" style="top:689.00px;font-size:15.6px;color:#4c5c83;left:46.00px;width:600px;text-align:center;">12</span>
<span class="t" style="top:689.00px;font-size:17.5px;color:#181d3a;letter-spacing:0.429px;left:433.50px;">Content Development</span>
<div class="a" style="left:868px;top:687px;width:18px;height:18px;background:#ffe838;border-radius:4.5px"></div>
<span class="t" style="top:689.00px;font-size:17.5px;color:#181d3a;letter-spacing:0.102px;left:898.00px;">In Progress</span>
<span class="t" style="top:689.00px;font-size:17.5px;color:#181d3a;letter-spacing:0.990px;right:451.01px;">22/03/2024</span>
<span class="t" style="top:689.00px;font-size:17.5px;color:#181d3a;letter-spacing:0.153px;left:1370.50px;">Knowledge Bas...</span>
<span class="t" style="top:689.00px;font-size:17.5px;color:#181d3a;letter-spacing:0.531px;right:9.97px;">2d</span>
<div class="a" style="left:321px;top:756px;width:1481px;height:1px;background:#e2e6f1"></div>
<span class="t" style="top:729.00px;font-size:15.6px;color:#4c5c83;left:46.00px;width:600px;text-align:center;">13</span>
<span class="t" style="top:729.00px;font-size:17.5px;color:#181d3a;letter-spacing:0.410px;left:433.50px;">Communication</span>
<div class="a" style="left:868px;top:728px;width:18px;height:18px;background:#ffe838;border-radius:4.5px"></div>
<span class="t" style="top:729.00px;font-size:17.5px;color:#181d3a;letter-spacing:0.102px;left:898.00px;">In Progress</span>
<span class="t" style="top:729.00px;font-size:17.5px;color:#181d3a;letter-spacing:0.990px;right:614.01px;">22/08/2024</span>
<span class="t" style="top:729.00px;font-size:17.5px;color:#181d3a;letter-spacing:0.990px;right:451.01px;">24/06/2024</span>
<svg style="left:1371.5px;top:726.0px" width="22" height="21" viewBox="0 0 22 21" fill="none" ><path d="M13.5 1.0 Q14.5 9.4 20.9 10.4 Q14.5 11.4 13.5 19.8 Q12.5 11.4 6.1 10.4 Q12.5 9.4 13.5 1.0 Z" fill="url(#sg)"/><path d="M3.7 1.2000000000000002 Q4.15 4.85 6.6 5.3 Q4.15 5.75 3.7 9.399999999999999 Q3.25 5.75 0.8000000000000003 5.3 Q3.25 4.85 3.7 1.2000000000000002 Z" fill="url(#sg)"/><path d="M7 12.899999999999999 Q7.45 16.25 9.9 16.7 Q7.45 17.15 7 20.5 Q6.55 17.15 4.1 16.7 Q6.55 16.25 7 12.899999999999999 Z" fill="url(#sg)"/></svg>
<span class="t" style="top:729.00px;font-size:17.5px;color:#181d3a;letter-spacing:0.141px;left:1401.00px;">Detailed ins...</span>
<span class="t" style="top:729.00px;font-size:17.5px;color:#181d3a;letter-spacing:0.342px;left:1536.50px;">David Martin</span>
<span class="t" style="top:729.00px;font-size:17.5px;color:#181d3a;letter-spacing:0.531px;right:9.97px;">1d</span>
<div class="a" style="left:321px;top:797px;width:1481px;height:1px;background:#e2e6f1"></div>
<span class="t" style="top:770.00px;font-size:15.6px;color:#4c5c83;left:46.00px;width:600px;text-align:center;">14</span>
<span class="t" style="top:769.00px;font-size:17.5px;color:#181d3a;letter-spacing:0.410px;left:433.50px;">Communication</span>
<div class="a" style="left:868px;top:768px;width:18px;height:18px;background:#ffe838;border-radius:4.5px"></div>
<span class="t" style="top:769.00px;font-size:17.5px;color:#181d3a;letter-spacing:0.102px;left:898.00px;">In Progress</span>
<span class="t" style="top:769.00px;font-size:17.5px;color:#d42b3c;letter-spacing:0.990px;right:614.01px;">09/05/2024</span>
<span class="t" style="top:769.00px;font-size:17.5px;color:#181d3a;letter-spacing:0.990px;right:451.01px;">18/04/2024</span>
<svg style="left:1371.5px;top:766.4px" width="22" height="21" viewBox="0 0 22 21" fill="none" ><path d="M13.5 1.0 Q14.5 9.4 20.9 10.4 Q14.5 11.4 13.5 19.8 Q12.5 11.4 6.1 10.4 Q12.5 9.4 13.5 1.0 Z" fill="url(#sg)"/><path d="M3.7 1.2000000000000002 Q4.15 4.85 6.6 5.3 Q4.15 5.75 3.7 9.399999999999999 Q3.25 5.75 0.8000000000000003 5.3 Q3.25 4.85 3.7 1.2000000000000002 Z" fill="url(#sg)"/><path d="M7 12.899999999999999 Q7.45 16.25 9.9 16.7 Q7.45 17.15 7 20.5 Q6.55 17.15 4.1 16.7 Q6.55 16.25 7 12.899999999999999 Z" fill="url(#sg)"/></svg>
<span class="t" style="top:769.00px;font-size:17.5px;color:#181d3a;letter-spacing:0.141px;left:1401.00px;">Detailed ins...</span>
<span class="t" style="top:769.00px;font-size:17.5px;color:#181d3a;letter-spacing:0.342px;left:1536.50px;">David Martin</span>
<span class="t" style="top:769.00px;font-size:17.5px;color:#181d3a;letter-spacing:0.531px;right:9.97px;">1d</span>
<div class="a" style="left:321px;top:837px;width:1481px;height:1px;background:#e2e6f1"></div>
<span class="t" style="top:810.00px;font-size:15.6px;color:#4c5c83;left:46.00px;width:600px;text-align:center;">15</span>
<span class="t" style="top:810.00px;font-size:17.5px;color:#181d3a;letter-spacing:0.309px;left:433.50px;">06. GA Launch</span>
<div class="a" style="left:868px;top:809px;width:18px;height:18px;background:#ffe838;border-radius:4.5px"></div>
<span class="t" style="top:810.00px;font-size:17.5px;color:#181d3a;letter-spacing:0.102px;left:898.00px;">In Progress</span>
<span class="t" style="top:810.00px;font-size:17.5px;color:#d42b3c;letter-spacing:0.990px;right:614.01px;">08/02/2024</span>
<span class="t" style="top:810.00px;font-size:17.5px;color:#181d3a;letter-spacing:0.990px;right:451.01px;">08/02/2024</span>
<span class="t" style="top:810.00px;font-size:17.5px;color:#181d3a;letter-spacing:0.273px;left:1370.50px;">Perform Custo...</span>
<span class="t" style="top:810.00px;font-size:17.5px;color:#181d3a;letter-spacing:0.176px;left:1536.50px;">Lisa Simpson</span>
<div class="a" style="left:321px;top:877px;width:1481px;height:1px;background:#e2e6f1"></div>
<span class="t" style="top:851.00px;font-size:15.6px;color:#4c5c83;left:46.00px;width:600px;text-align:center;">16</span>
<span class="t" style="top:850.00px;font-size:17.5px;color:#181d3a;letter-spacing:-0.203px;left:433.50px;">TEST 2</span>
<div class="a" style="left:868px;top:849px;width:18px;height:18px;background:#0dbad3;border-radius:4.5px"></div>
<span class="t" style="top:850.00px;font-size:17.5px;color:#181d3a;letter-spacing:-0.008px;left:898.00px;">New</span>
<span class="t" style="top:850.00px;font-size:17.5px;color:#d42b3c;letter-spacing:0.990px;right:614.01px;">23/05/2024</span>
<span class="t" style="top:850.00px;font-size:17.5px;color:#181d3a;letter-spacing:0.990px;right:451.01px;">06/05/2024</span>
<span class="t" style="top:850.00px;font-size:17.5px;color:#181d3a;letter-spacing:0.370px;left:1370.50px;">Website Launch</span>
<span class="t" style="top:850.00px;font-size:17.5px;color:#181d3a;letter-spacing:0.531px;right:9.97px;">5d</span>
<div class="a" style="left:321px;top:918px;width:1481px;height:1px;background:#e2e6f1"></div>
<span class="t" style="top:891.00px;font-size:15.6px;color:#4c5c83;left:46.00px;width:600px;text-align:center;">17</span>
<span class="t" style="top:891.00px;font-size:17.5px;color:#181d3a;letter-spacing:-0.403px;left:433.50px;">TEST 1</span>
<div class="a" style="left:868px;top:889px;width:18px;height:18px;background:#0dbad3;border-radius:4.5px"></div>
<span class="t" style="top:891.00px;font-size:17.5px;color:#181d3a;letter-spacing:-0.008px;left:898.00px;">New</span>
<span class="t" style="top:891.00px;font-size:17.5px;color:#d42b3c;letter-spacing:0.990px;right:614.01px;">17/05/2024</span>
<span class="t" style="top:891.00px;font-size:17.5px;color:#181d3a;letter-spacing:0.990px;right:451.01px;">06/05/2024</span>
<span class="t" style="top:891.00px;font-size:17.5px;color:#181d3a;letter-spacing:0.370px;left:1370.50px;">Website Launch</span>
<span class="t" style="top:891.00px;font-size:17.5px;color:#181d3a;letter-spacing:0.898px;right:9.60px;">13d</span>
<div class="a" style="left:321px;top:958px;width:1481px;height:1px;background:#e2e6f1"></div>
<span class="t" style="top:931.00px;font-size:15.6px;color:#4c5c83;left:46.00px;width:600px;text-align:center;">18</span>
<span class="t" style="top:931.00px;font-size:17.5px;color:#181d3a;letter-spacing:0.327px;left:433.50px;">External Communication</span>
<div class="a" style="left:868px;top:930px;width:18px;height:18px;background:#0dbad3;border-radius:4.5px"></div>
<span class="t" style="top:931.00px;font-size:17.5px;color:#181d3a;letter-spacing:-0.008px;left:898.00px;">New</span>
<span class="t" style="top:931.00px;font-size:17.5px;color:#d42b3c;letter-spacing:0.990px;right:614.01px;">08/04/2024</span>
<span class="t" style="top:931.00px;font-size:17.5px;color:#181d3a;letter-spacing:0.990px;right:451.01px;">22/03/2024</span>
<span class="t" style="top:931.00px;font-size:17.5px;color:#181d3a;letter-spacing:0.202px;left:1370.50px;">Website Launch...</span>
<span class="t" style="top:931.00px;font-size:17.5px;color:#181d3a;letter-spacing:0.531px;right:9.97px;">1d</span>
<span class="t" style="top:972.00px;font-size:15.6px;color:#4c5c83;left:46.00px;width:600px;text-align:center;">19</span>
<span class="t" style="top:971.00px;font-size:17.5px;color:#181d3a;letter-spacing:0.192px;left:433.50px;">03. External Research</span>
<div class="a" style="left:868px;top:970px;width:18px;height:18px;background:#0dbad3;border-radius:4.5px"></div>
<span class="t" style="top:971.00px;font-size:17.5px;color:#181d3a;letter-spacing:-0.008px;left:898.00px;">New</span>
<span class="t" style="top:971.00px;font-size:17.5px;color:#181d3a;letter-spacing:0.990px;right:451.01px;">24/06/2024</span>
<svg style="left:1371.5px;top:968.4px" width="22" height="21" viewBox="0 0 22 21" fill="none" ><path d="M13.5 1.0 Q14.5 9.4 20.9 10.4 Q14.5 11.4 13.5 19.8 Q12.5 11.4 6.1 10.4 Q12.5 9.4 13.5 1.0 Z" fill="url(#sg)"/><path d="M3.7 1.2000000000000002 Q4.15 4.85 6.6 5.3 Q4.15 5.75 3.7 9.399999999999999 Q3.25 5.75 0.8000000000000003 5.3 Q3.25 4.85 3.7 1.2000000000000002 Z" fill="url(#sg)"/><path d="M7 12.899999999999999 Q7.45 16.25 9.9 16.7 Q7.45 17.15 7 20.5 Q6.55 17.15 4.1 16.7 Q6.55 16.25 7 12.899999999999999 Z" fill="url(#sg)"/></svg>
<span class="t" style="top:971.00px;font-size:17.5px;color:#181d3a;letter-spacing:0.141px;left:1401.00px;">Detailed ins...</span>
<span class="t" style="top:971.00px;font-size:17.5px;color:#181d3a;letter-spacing:0.342px;left:1536.50px;">David Martin</span>
<span class="t" style="top:971.00px;font-size:17.5px;color:#181d3a;letter-spacing:0.531px;right:9.97px;">5d</span>
<div class="a" style="left:321px;top:981px;width:1481px;height:41px;background:linear-gradient(#ffffff,#f3f4f6)"></div>
<div class="a" style="left:321px;top:981px;width:1481px;height:1px;background:#e2e6f1"></div>
<span class="t" style="top:994.00px;font-size:17.5px;color:#181d3a;letter-spacing:0.493px;left:383.00px;">Total: 607 tasks</span>
<span class="t" style="top:998.00px;font-size:12px;color:#181d3a;letter-spacing:1.492px;-webkit-text-stroke:0.55px;left:1046.00px;">MAX</span>
<span class="t" style="top:994.00px;font-size:17.5px;color:#181d3a;letter-spacing:0.990px;right:614.01px;">14/10/2024</span>
<span class="t" style="top:998.00px;font-size:12px;color:#181d3a;letter-spacing:0.664px;-webkit-text-stroke:0.55px;left:1692.00px;">SUM</span>
<span class="t" style="top:994.00px;font-size:17.5px;color:#181d3a;letter-spacing:1.082px;right:9.42px;">2721d</span>
<div class="a" style="left:371px;top:191px;width:1px;height:831px;background:#e2e6f1"></div>
<div class="a" style="left:856px;top:191px;width:1px;height:831px;background:#e2e6f1"></div>
<div class="a" style="left:1035px;top:191px;width:1px;height:831px;background:#e2e6f1"></div>
<div class="a" style="left:1196px;top:191px;width:1px;height:831px;background:#e2e6f1"></div>
<div class="a" style="left:1359px;top:191px;width:1px;height:831px;background:#e2e6f1"></div>
<div class="a" style="left:1525px;top:191px;width:1px;height:831px;background:#e2e6f1"></div>
<div class="a" style="left:1680px;top:191px;width:1px;height:831px;background:#e2e6f1"></div>
<div class="a" style="left:1348px;top:135px;width:444px;height:267px;background:#ffffff;border-radius:12px;box-shadow:0 4px 22px rgba(30,40,90,0.16),0 0 3px rgba(30,40,90,0.10)"></div>
<svg style="left:1414px;top:127px" width="20" height="9" viewBox="0 0 20 9" fill="none" ><path d="M0 9 L10 0 L20 9 Z" fill="#ffffff"/></svg>
<span class="t" style="top:170.00px;font-size:17.5px;color:#181d3a;letter-spacing:0.414px;left:1378.50px;">Notification will be sent to your Inbox and</span>
<span class="t" style="top:195.00px;font-size:17.5px;color:#181d3a;letter-spacing:0.207px;left:1378.50px;">email address.</span>
<div class="a" style="left:1369px;top:220px;width:407px;height:101px;background:#0bce62;border-radius:11px"></div>
<div class="a" style="left:1375.5px;top:226.5px;width:394.0px;height:88.0px;background:#ffffff;border-radius:7px"></div>
<svg style="left:1379px;top:232px" width="18" height="18" viewBox="0 0 18 18" fill="none" stroke="#181d3a" stroke-width="1.35" stroke-linecap="round" stroke-linejoin="round"><circle cx="9" cy="9" r="8.1"/><path d="M9 4.2 V9.2 L12 11"/></svg>
<span class="t" style="top:233.00px;font-size:17.5px;color:#181d3a;letter-spacing:0.461px;left:1404.50px;">5:30 pm</span>
<svg style="left:1481px;top:237px" width="12" height="8" viewBox="0 0 12 8" fill="none" stroke="#181d3a" stroke-width="1.9" stroke-linecap="round" stroke-linejoin="round"><path d="M1.5 1.2 L6 5.8 L10.5 1.2"/></svg>
<div class="a" style="left:1378px;top:271px;width:50px;height:40px;background:#eef1f9;border-radius:9px"></div>
<span class="t" style="top:284.00px;font-size:17.5px;color:#181d3a;left:1103.00px;width:600px;text-align:center;">Su</span>
<div class="a" style="left:1434px;top:271px;width:50px;height:40px;background:#eef1f9;border-radius:9px"></div>
<span class="t" style="top:284.00px;font-size:17.5px;color:#181d3a;left:1158.60px;width:600px;text-align:center;">Mo</span>
<div class="a" style="left:1489px;top:271px;width:50px;height:40px;background:#eef1f9;border-radius:9px"></div>
<span class="t" style="top:284.00px;font-size:17.5px;color:#181d3a;left:1214.20px;width:600px;text-align:center;">Tu</span>
<div class="a" style="left:1545px;top:271px;width:50px;height:40px;background:#eef1f9;border-radius:9px"></div>
<span class="t" style="top:284.00px;font-size:17.5px;color:#181d3a;left:1269.80px;width:600px;text-align:center;">We</span>
<div class="a" style="left:1600px;top:271px;width:50px;height:40px;background:#eef1f9;border-radius:9px"></div>
<span class="t" style="top:284.00px;font-size:17.5px;color:#181d3a;left:1325.40px;width:600px;text-align:center;">Th</span>
<div class="a" style="left:1656px;top:271px;width:50px;height:40px;background:#eef1f9;border-radius:9px"></div>
<span class="t" style="top:284.00px;font-size:17.5px;color:#181d3a;left:1381.00px;width:600px;text-align:center;">Fr</span>
<div class="a" style="left:1712px;top:271px;width:50px;height:40px;background:#eef1f9;border-radius:9px"></div>
<span class="t" style="top:284.00px;font-size:17.5px;color:#181d3a;left:1436.60px;width:600px;text-align:center;">Sa</span>
<div class="a" style="left:1370px;top:323px;width:160px;height:58px;background:#0bce62;border-radius:11px"></div>
<div class="a" style="left:1375.6px;top:329px;width:148.60000000000014px;height:45.80000000000001px;background:#ffffff;border-radius:7px"></div>
<div class="a" style="left:1378px;top:332px;width:144px;height:40px;background:#d41f3c;border-radius:9px"></div>
<span class="t" style="top:344.00px;font-size:17.5px;color:#ffffff;letter-spacing:0.422px;-webkit-text-stroke:0.2px #ffffff;left:1399.00px;">Unsubscribe</span>
<span class="t" style="top:344.00px;font-size:17.5px;color:#181d3a;letter-spacing:0.103px;left:1552.00px;">Cancel</span>
<div class="a" style="left:1399px;top:81px;width:123px;height:47px;background:#0bce62;border-radius:11px"></div>
<div class="a" style="left:1405px;top:87.5px;width:111.20000000000005px;height:34.2px;background:#ffffff;border-radius:8px"></div>
<span class="t" style="top:98.00px;font-size:17.8px;color:#181d3a;letter-spacing:0.337px;left:1414.00px;">Subscribed</span>
<div class="a" style="left:1348.0px;top:33.5px;width:67.0px;height:67.0px;background:rgba(11,206,98,0.185);border-radius:50%"></div>
<div class="a" style="left:1358.5px;top:44px;width:46.0px;height:46px;background:#0bce62;border-radius:50%"></div>
<span class="t" style="top:56.00px;font-size:24.5px;color:#ffffff;font-weight:700;transform:scaleX(1.15);transform-origin:50% 0;left:1081.50px;width:600px;text-align:center;">2</span>
<div class="a" style="left:1309.0px;top:228.0px;width:67.0px;height:67.0px;background:rgba(11,206,98,0.185);border-radius:50%"></div>
<div class="a" style="left:1319.5px;top:238.5px;width:46.0px;height:46.0px;background:#0bce62;border-radius:50%"></div>
<span class="t" style="top:250.00px;font-size:24.5px;color:#ffffff;font-weight:700;transform:scaleX(1.15);transform-origin:50% 0;left:1042.50px;width:600px;text-align:center;">3</span>
<div class="a" style="left:1309.0px;top:324.0px;width:67.0px;height:67.0px;background:rgba(11,206,98,0.185);border-radius:50%"></div>
<div class="a" style="left:1319.5px;top:334.5px;width:46.0px;height:46.0px;background:#0bce62;border-radius:50%"></div>
<span class="t" style="top:346.00px;font-size:24.5px;color:#ffffff;font-weight:700;transform:scaleX(1.15);transform-origin:50% 0;left:1042.50px;width:600px;text-align:center;">4</span>
</div></div></body></html>
